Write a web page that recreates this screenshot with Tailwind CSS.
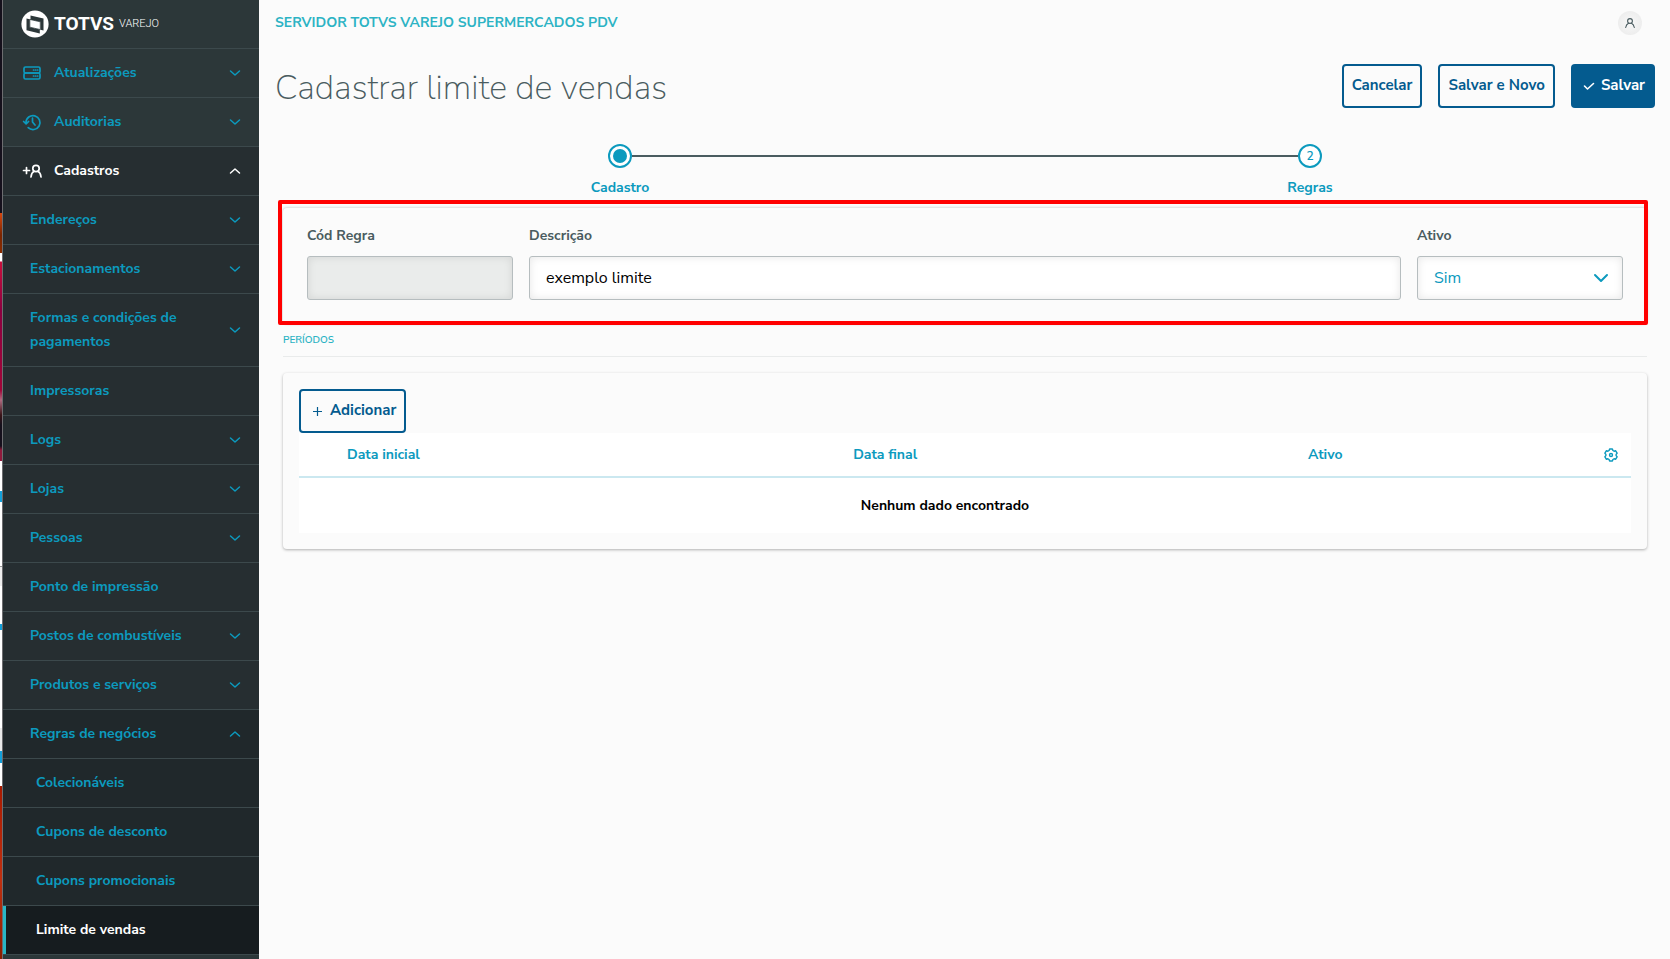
<!DOCTYPE html>
<html lang="pt-BR">
<head>
    <meta charset="UTF-8">
    <meta name="viewport" content="width=device-width, initial-scale=1.0">
    <title>Cadastrar limite de vendas</title>
    <script src="https://cdn.jsdelivr.net/npm/@tailwindcss/browser@4"></script>
</head>
<body class="min-h-screen flex bg-[#fbfbfb] font-['Nunito_Sans','Lato',sans-serif] text-sm text-[#4a5c60]">

    <!-- window edge -->
    <div class="w-[3px] shrink-0 border-r border-[#6d6d70] bg-[linear-gradient(#15101c_0_213px,#d9480f_213px,#7a2500_235px,#8a2c00_253px,#fff_253px_261px,#c80f3c_262px,#8c0040_310px,#a00538_390px,#b06a80_400px,#3a1418_415px,#15101c_425px_446px,#8f1a3c_450px_461px,#fff_461px_491px,#139fd9_491px_502px,#fff_502px_566px,#999_566px_567px,#eee_567px_586px,#fff_586px_624px,#139fd9_624px_630px,#fff_630px_728px,#e9e9e9_728px_751px,#139fd9_751px_763px,#fff_763px_786px,#a81a00_786px,#c03010_880px,#8a1c00_959px)]"></div>

    <aside class="w-64 shrink-0 bg-[#2c3739]">
        <div class="h-[49px] flex items-center gap-[5px] pl-[18px] pb-px border-b border-[#3c494c] text-white">
            <svg class="w-7 h-7" viewBox="0 0 28 28" aria-hidden="true">
                <circle cx="14" cy="14" r="13.600" fill="currentColor"/>
                <path d="M9.500 5.500L22.500 8.500V20.500L19.500 19.800V12L9.500 9.800z" fill="#2c3739"/>
                <path d="M5.500 8.500L8.800 9.200V17.200L18.800 19.400V23.500L5.500 20.300z" fill="#2c3739"/>
                <path d="M8.800 9.400L19.300 11.800V19.600L8.800 17.200z" fill="currentColor" stroke="#2c3739" stroke-width=".8"/>
            </svg>
            <span class="font-['Roboto',sans-serif] font-bold text-[19px] leading-6">TOTVS</span>
            <span class="font-['Roboto',sans-serif] font-light text-[11px] leading-6">VAREJO</span>
        </div>
        <nav id="menu" aria-label="Menu"></nav>
    </aside>

    <div class="flex-1 min-w-0">
        <header class="flex items-center justify-between pt-[11px] pl-4 pr-7">
            <span class="font-bold text-[#2cb3c4] text-sm leading-6">SERVIDOR TOTVS VAREJO SUPERMERCADOS PDV</span>
            <button aria-label="Perfil" class="w-6 h-6 rounded-full flex items-center justify-center bg-[radial-gradient(#f8f8f8,#e9e9e9)]">
                <svg class="w-3 h-3" viewBox="0 0 12 12" fill="none" stroke="#4a5c60" stroke-width="1.1" stroke-linecap="round">
                    <circle cx="6" cy="4" r="2.4"/>
                    <path d="M4.5 6.2C3 7 2 8.700 1.700 10.500M7.500 6.200C9 7 10 8.700 10.300 10.500"/>
                </svg>
            </button>
        </header>

        <main class="pl-4 pr-[15px]">
            <div class="flex items-start justify-between pt-[29px]">
                <h1 class="font-extralight text-[34px] leading-12">Cadastrar limite de vendas</h1>
                <div class="flex gap-4 text-[15px] font-bold text-[#045b8f]">
                    <button class="h-11 px-2 border-2 border-[#045b8f] rounded">Cancelar</button>
                    <button class="h-11 px-2 border-2 border-[#045b8f] rounded">Salvar e Novo</button>
                    <button class="h-11 pl-3 pr-[10px] flex items-center gap-[6px] rounded bg-[#045b8f] text-white">
                        <svg class="w-3 h-3" viewBox="0 0 12 12" fill="none" stroke="currentColor" stroke-width="1.6" stroke-linecap="round" stroke-linejoin="round"><path d="M1.500 6l3 3 6-5.500"/></svg>
                        Salvar
                    </button>
                </div>
            </div>

            <!-- stepper -->
            <ol class="grid grid-cols-2 pt-8 font-bold text-[#0c9abe]">
                <li class="flex flex-col items-center">
                    <div class="w-full flex items-center">
                        <span class="flex-1"></span>
                        <span class="w-6 h-6 rounded-full border-2 border-[#0c9abe] bg-white flex items-center justify-center"><span class="w-[14px] h-[14px] rounded-full bg-[#0c9abe]"></span></span>
                        <span class="flex-1 h-[2px] bg-[#4a5c60]"></span>
                    </div>
                    <span class="mt-2 leading-6">Cadastro</span>
                </li>
                <li class="flex flex-col items-center">
                    <div class="w-full flex items-center">
                        <span class="flex-1 h-[2px] bg-[#4a5c60]"></span>
                        <span class="w-6 h-6 rounded-full border-2 border-[#0c9abe] bg-white flex items-center justify-center text-xs font-semibold">2</span>
                        <span class="flex-1"></span>
                    </div>
                    <span class="mt-2 leading-6">Regras</span>
                </li>
            </ol>

            <div class="px-2">
                <section class="relative mt-2 px-6 pt-4 pb-6 rounded shadow-[0_0_3px_rgba(0,0,0,0.25)] grid grid-cols-12 gap-4">
                    <div class="absolute -left-[5px] -right-px -top-2 -bottom-px border-4 border-[#ff0000] rounded-[2px] pointer-events-none"></div>
                    <div class="col-span-2">
                        <label for="codigo" class="block font-bold leading-6 mb-2">Cód Regra</label>
                        <input id="codigo" disabled class="block w-full h-11 px-4 text-base rounded-[3px] border border-[#b6bdbf] bg-[#eaeceb] shadow-[inset_0_0_8px_rgba(0,0,0,0.1)]">
                    </div>
                    <div class="col-span-8">
                        <label for="descricao" class="block font-bold leading-6 mb-2">Descrição</label>
                        <input id="descricao" value="exemplo limite" class="block w-full h-11 px-4 text-base text-black rounded-[3px] border border-[#b6bdbf] bg-white shadow-[inset_0_0_8px_rgba(0,0,0,0.1)]">
                    </div>
                    <div class="col-span-2">
                        <label for="ativo" class="block font-bold leading-6 mb-2">Ativo</label>
                        <div class="relative">
                            <select id="ativo" class="appearance-none block w-full h-11 px-4 text-base text-[#0c9abe] rounded-[3px] border border-[#b6bdbf] bg-white shadow-[inset_0_0_8px_rgba(0,0,0,0.1)]">
                                <option>Sim</option>
                                <option>Não</option>
                            </select>
                            <svg class="absolute right-[14px] top-[14px] w-4 h-4 pointer-events-none" viewBox="0 0 16 16" fill="none" stroke="#0c9abe" stroke-width="2" stroke-linecap="round" stroke-linejoin="round"><path d="M2 5l6 6 6-6"/></svg>
                        </div>
                    </div>
                </section>

                <h2 class="mt-2 h-[25px] leading-4 text-[10px] font-semibold text-[#2cb3c4] border-b border-[#e9ebeb]">PERÍODOS</h2>

                <section class="mt-4 p-4 rounded shadow-[0_1px_3px_rgba(0,0,0,0.3)]">
                    <button class="h-11 pl-3 pr-2 flex items-center gap-2 border-2 border-[#045b8f] rounded text-[15px] font-bold text-[#045b8f]">
                        <svg class="w-[9px] h-[9px]" viewBox="0 0 9 9" stroke="currentColor" stroke-width="1.200"><path d="M4.500 0v9M0 4.500h9"/></svg>
                        Adicionar
                    </button>
                    <table class="w-full table-fixed bg-white text-left">
                        <thead class="text-[#0c9abe]">
                            <tr class="h-11 border-b-2 border-[#cbe8f0]">
                                <th class="w-8"></th>
                                <th class="w-[38%] px-4 font-bold">Data inicial</th>
                                <th class="px-4 font-bold">Data final</th>
                                <th class="w-[299px] px-4 font-bold">Ativo</th>
                                <th class="w-10">
                                    <button aria-label="Colunas" class="block mx-auto">
                                        <svg class="w-[14px] h-[14px]" viewBox="0 0 14 14" fill="none" stroke="currentColor" stroke-width="1.400" stroke-linejoin="round">
                                            <path d="M5.600 1h2.800l.5 1.500 1.200.7 1.600-.4 1.400 2.400-1 1.200v1.200l1 1.200-1.400 2.400-1.600-.4-1.200.7-.5 1.500H5.600l-.5-1.500-1.200-.7-1.600.4L.9 8.800l1-1.200V6.400l-1-1.200 1.400-2.400 1.600.4 1.200-.7z"/>
                                            <circle cx="7" cy="7" r="1.500"/>
                                        </svg>
                                    </button>
                                </th>
                            </tr>
                        </thead>
                        <tbody>
                            <tr class="h-14">
                                <td colspan="4" class="text-center font-bold text-black">Nenhum dado encontrado</td>
                                <td></td>
                            </tr>
                        </tbody>
                    </table>
                </section>
            </div>
        </main>
    </div>

    <script>
        const icons = {
            server: '<rect x="1" y="3" width="16" height="6" rx="1.500"/><rect x="1" y="9" width="16" height="6" rx="1.500"/><path d="M10.500 6h.2M12.500 6h.2M14.500 6h.2M10.500 12h.2M12.500 12h.2M14.500 12h.2"/>',
            history: '<path d="M3 9.500a7 7 0 1 1 2.200 5.200M.6 8.500l2.500 2.400 2.500-2.400M9.500 5.200V9l2.500 3"/>',
            user: '<path d="M.5 8.500h6M3.500 5.500v6"/><circle cx="13" cy="6.500" r="3.200"/><path d="M11.200 9.300C9.200 10.300 8.200 12.500 8 15M14.800 9.300c2 1 3 3.200 3.200 5.700"/>'
        };

        const items = [
            { label: 'Atualizações', icon: 'server', level: 0, arrow: 'down' },
            { label: 'Auditorias', icon: 'history', level: 0, arrow: 'down' },
            { label: 'Cadastros', icon: 'user', level: 0, arrow: 'up', open: true },
            { label: 'Endereços', level: 1, arrow: 'down' },
            { label: 'Estacionamentos', level: 1, arrow: 'down' },
            { label: 'Formas e condições de pagamentos', level: 1, arrow: 'down' },
            { label: 'Impressoras', level: 1 },
            { label: 'Logs', level: 1, arrow: 'down' },
            { label: 'Lojas', level: 1, arrow: 'down' },
            { label: 'Pessoas', level: 1, arrow: 'down' },
            { label: 'Ponto de impressão', level: 1 },
            { label: 'Postos de combustíveis', level: 1, arrow: 'down' },
            { label: 'Produtos e serviços', level: 1, arrow: 'down' },
            { label: 'Regras de negócios', level: 1, arrow: 'up', open: true },
            { label: 'Colecionáveis', level: 2 },
            { label: 'Cupons de desconto', level: 2 },
            { label: 'Cupons promocionais', level: 2 },
            { label: 'Limite de vendas', level: 2, active: true }
        ];

        const padding = ['pl-5', 'pl-[27px]', 'pl-[33px]'];
        const arrows = { down: 'M3.500 6l4.500 4 4.500-4', up: 'M3.500 10L8 6l4.500 4' };

        const rowColor = (item) => {
            if (item.active) return 'bg-[#161c1f] text-white shadow-[inset_3px_0_0_#29b6c5]';
            if (item.level === 2) return 'bg-[#20282b] text-[#0c9abe]';
            if (item.level === 1) return item.open ? 'bg-[#20282b] text-[#0c9abe]' : 'bg-[#262e31] text-[#0c9abe]';
            return item.open ? 'bg-[#262e31] text-white' : 'text-[#0c9abe]';
        };

        const renderItem = (item) => {
            const tag = item.arrow ? 'button' : 'a href="#"';
            return `
                <${tag} class="w-full flex items-center text-left py-3 pr-4 border-b border-[#3c494c] font-bold leading-6 ${padding[item.level]} ${rowColor(item)}">
                    ${item.icon ? `<svg class="w-[18px] h-[18px] mr-[13px] shrink-0 overflow-visible" viewBox="0 0 18 18" fill="none" stroke="currentColor" stroke-width="1.700" stroke-linecap="round" stroke-linejoin="round">${icons[item.icon]}</svg>` : ''}
                    <span class="flex-1 pr-8">${item.label}</span>
                    ${item.arrow ? `<svg class="w-4 h-4 shrink-0" viewBox="0 0 16 16" fill="none" stroke="currentColor" stroke-width="1.500" stroke-linecap="round" stroke-linejoin="round"><path d="${arrows[item.arrow]}"/></svg>` : ''}
                </${item.arrow ? 'button' : 'a'}>
            `;
        };

        document.getElementById('menu').innerHTML = items.map(renderItem).join('');
    </script>
</body>
</html>
